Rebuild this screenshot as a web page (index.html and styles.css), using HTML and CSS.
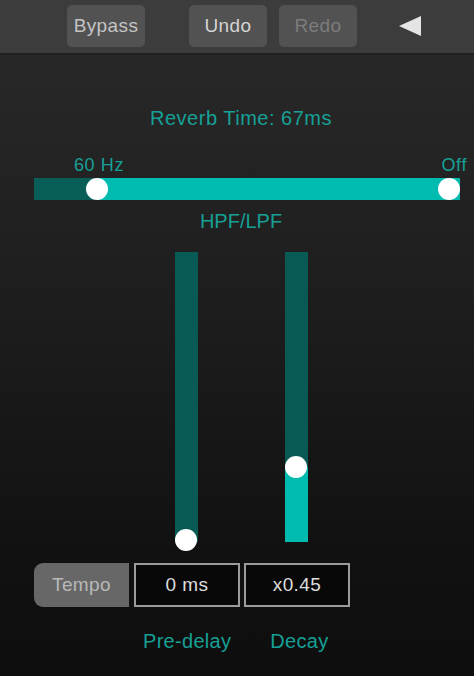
FILE: index.html
```html
<!DOCTYPE html>
<html>
<head>
<meta charset="utf-8">
<link rel="stylesheet" href="styles.css">
</head>
<body>
<div class="app">
  <header class="toolbar">
    <button class="tbtn">Bypass</button>
    <button class="tbtn undo">Undo</button>
    <button class="tbtn redo">Redo</button>
    <svg class="back" width="22" height="20" viewBox="0 0 22 20"><polygon points="0,10 22,0 22,20" fill="#e4e4e4"/></svg>
  </header>
  <main class="panel">
    <div class="title">Reverb Time: 67ms</div>
    <div class="range-labels"><span>60 Hz</span><span>Off</span></div>
    <div class="hslider">
      <div class="hfill"></div>
      <span class="thumb h1"></span>
      <span class="thumb h2"></span>
    </div>
    <div class="caption">HPF/LPF</div>
    <div class="vsliders">
      <div class="vtrack">
        <span class="thumb v1"></span>
      </div>
      <div class="vtrack">
        <div class="vfill"></div>
        <span class="thumb v2"></span>
      </div>
    </div>
    <div class="controls">
      <button class="tempo">Tempo</button>
      <div class="valbox">0 ms</div>
      <div class="valbox">x0.45</div>
    </div>
    <div class="labels">
      <span class="lbl pre">Pre-delay</span>
      <span class="lbl decay">Decay</span>
    </div>
  </main>
</div>
</body>
</html>
```
FILE: styles.css
```css
html, body {
  margin: 0;
  padding: 0;
  background: #101010;
}
.app {
  width: 474px;
  height: 676px;
  overflow: hidden;
  font-family: "Liberation Sans", Arial, sans-serif;
  display: flex;
  flex-direction: column;
}
.toolbar {
  height: 55px;
  box-sizing: border-box;
  background: #3c3c3c;
  display: flex;
  align-items: flex-start;
  padding: 5px 0 0 67px;
  border-bottom: 2px solid #1f1f1f;
  flex: none;
}
.tbtn {
  width: 78px;
  height: 42px;
  border: none;
  border-radius: 5px;
  background: #525252;
  color: #c4c4c4;
  font-family: "Liberation Sans", Arial, sans-serif;
  font-size: 19px;
  letter-spacing: 0.4px;
  padding: 0;
  margin: 0;
}
.undo {
  margin-left: 44px;
  color: #d4d4d4;
}
.redo {
  margin-left: 12px;
  color: #7c7c7c;
}
.back {
  margin-left: 42px;
  margin-top: 11px;
  display: block;
}
.panel {
  flex: 1;
  background: linear-gradient(#282828 0%, #1c1c1c 45%, #111111 80%, #0e0e0e 100%);
  display: flex;
  flex-direction: column;
}
.title, .caption {
  color: #16a096;
  font-size: 20px;
  line-height: 20px;
  text-align: center;
  padding-left: 8px;
}
.title {
  margin-top: 53px;
  letter-spacing: 0.5px;
}
.range-labels {
  margin-top: 28px;
  display: flex;
  justify-content: space-between;
  padding: 0 7px 0 74px;
  color: #16a096;
  font-size: 18px;
  line-height: 18px;
  letter-spacing: 0.6px;
}
.hslider {
  position: relative;
  margin: 4px 0 0 34px;
  width: 426px;
  height: 22px;
  background: #0a5e58;
}
.hfill {
  margin-left: 63px;
  height: 22px;
  background: #00bbb0;
}
.thumb {
  position: absolute;
  width: 22px;
  height: 22px;
  border-radius: 50%;
  background: #ffffff;
}
.h1 { left: 52px; top: 0; }
.h2 { left: 404px; top: 0; }
.caption {
  margin-top: 11px;
}
.vsliders {
  margin-top: 21px;
  display: flex;
  padding-left: 175px;
  gap: 87px;
}
.vtrack {
  position: relative;
  width: 23px;
  height: 290px;
  background: #075b54;
  display: flex;
  flex-direction: column;
  justify-content: flex-end;
}
.vfill {
  height: 75px;
  background: #00bbb0;
}
.v1 { left: 0; top: 277px; }
.v2 { left: 0; top: 204px; }
.controls {
  margin-top: 21px;
  display: flex;
  padding-left: 34px;
  height: 44px;
}
.tempo {
  width: 95px;
  height: 44px;
  border: none;
  border-radius: 9px 0 0 9px;
  background: #676767;
  color: #b9b9b9;
  font-family: "Liberation Sans", Arial, sans-serif;
  font-size: 19px;
  letter-spacing: 0.4px;
  padding: 0;
  margin: 0;
}
.valbox {
  width: 106px;
  height: 44px;
  box-sizing: border-box;
  border: 2px solid #9b9b9b;
  background: #080808;
  color: #dedede;
  font-size: 19px;
  letter-spacing: 0.4px;
  display: flex;
  align-items: center;
  justify-content: center;
  margin-left: 5px;
}
.valbox + .valbox {
  margin-left: 4px;
}
.labels {
  margin-top: 24px;
  display: flex;
  padding-left: 143px;
  color: #16a096;
  font-size: 20px;
  line-height: 20px;
  letter-spacing: 0.3px;
}
.decay {
  margin-left: 39px;
}
```
